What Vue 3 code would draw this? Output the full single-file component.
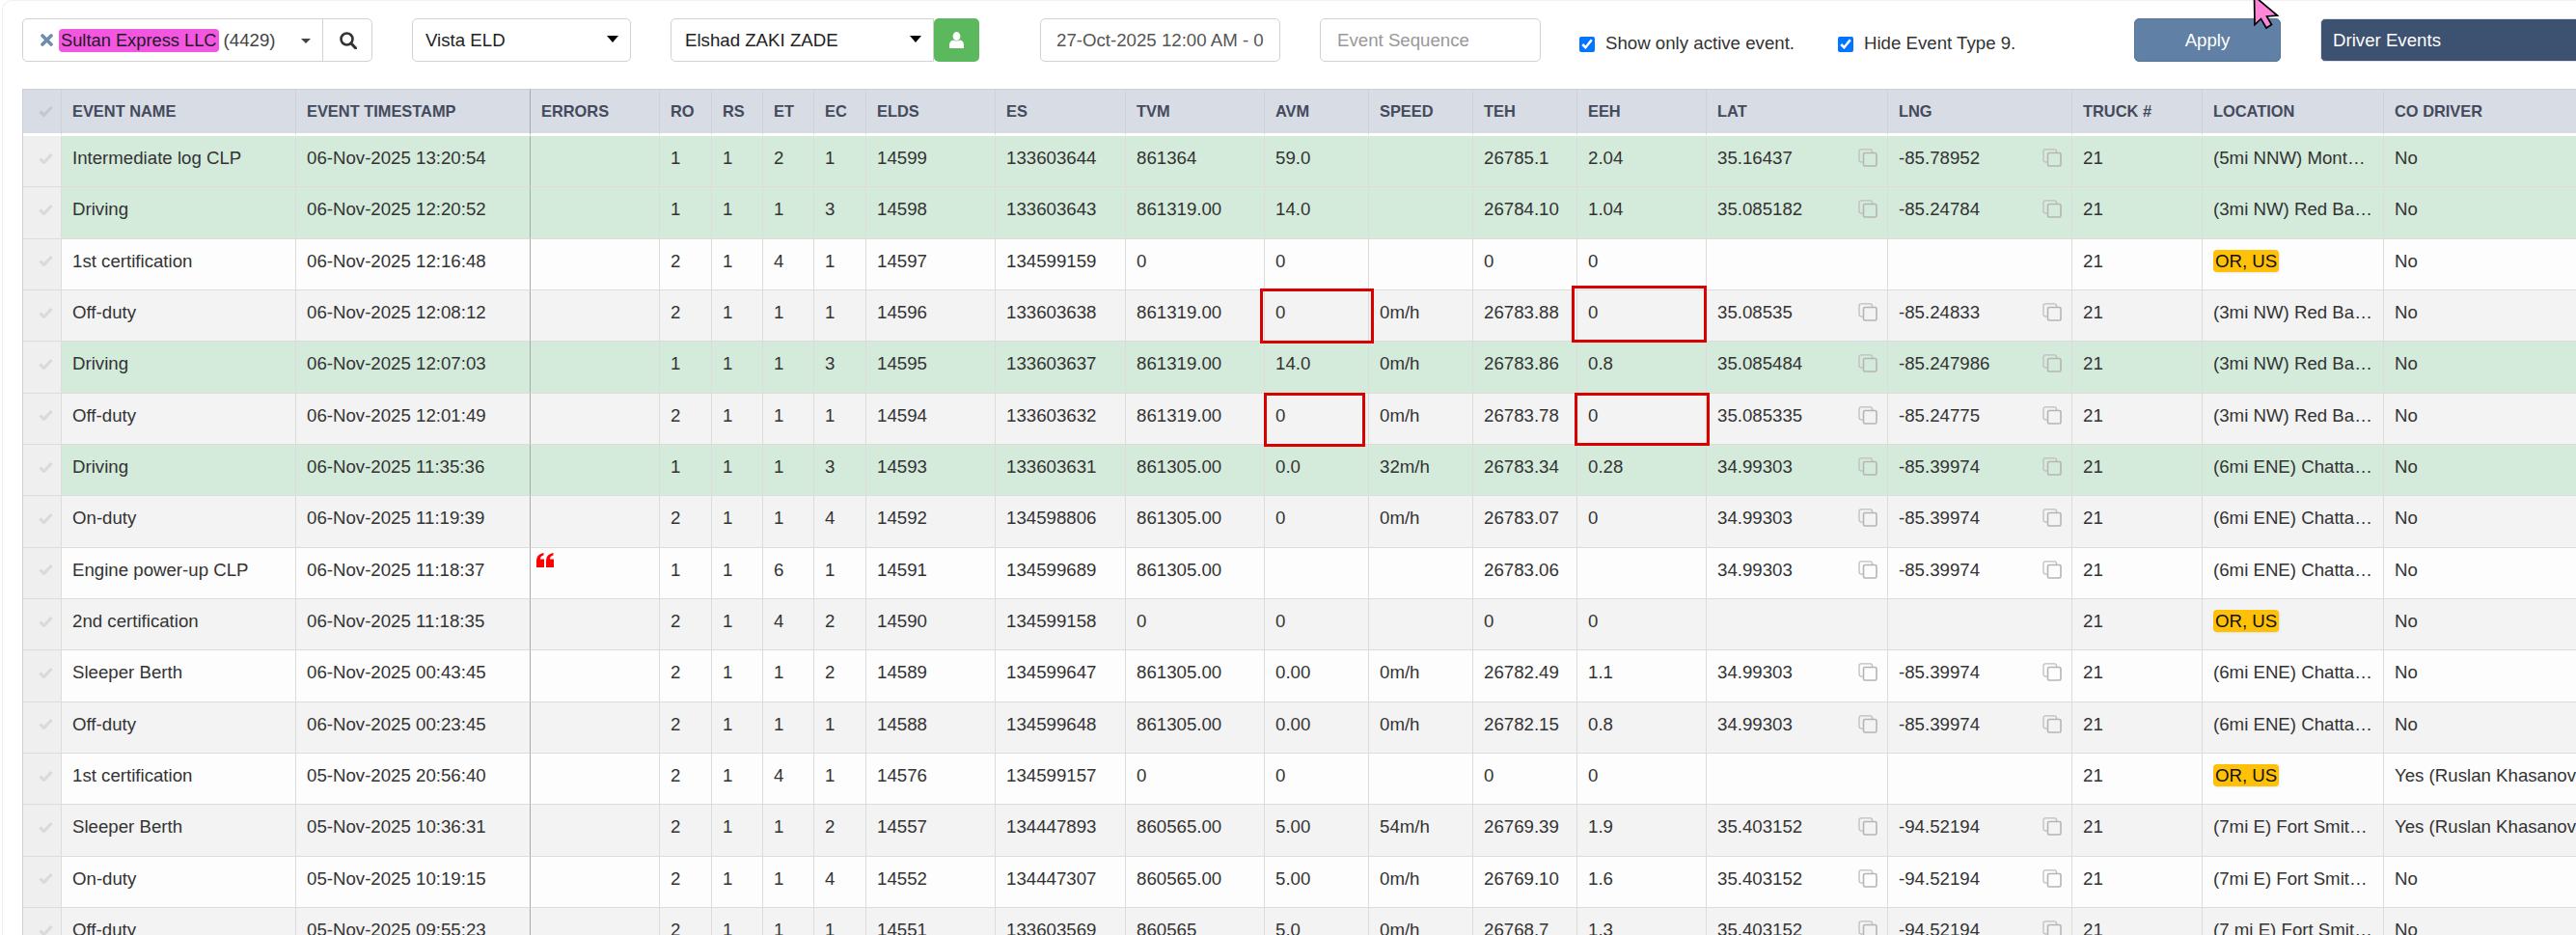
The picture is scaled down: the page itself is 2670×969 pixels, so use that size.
<script setup>
const widths = [39, 243, 243, 134, 54, 53, 53, 54, 134, 135, 144, 108, 108, 108, 134, 188, 191, 135, 188, 300]
const heads = ['EVENT NAME', 'EVENT TIMESTAMP', 'ERRORS', 'RO', 'RS', 'ET', 'EC', 'ELDS', 'ES', 'TVM', 'AVM', 'SPEED', 'TEH', 'EEH', 'LAT', 'LNG', 'TRUCK #', 'LOCATION', 'CO DRIVER']
const monte = '(5mi NNW) Mont…'
const red = '(3mi NW) Red Ba…'
const chat = '(6mi ENE) Chatta…'
const fort = '(7mi E) Fort Smit…'
const fort2 = '(7 mi E) Fort Smit…'
const yes = 'Yes (Ruslan Khasanov)'
const rows = [
  { g: 1, v: ['Intermediate log CLP', '06-Nov-2025 13:20:54', '', 1, 1, 2, 1, 14599, 133603644, '861364', '59.0', '', '26785.1', '2.04', '35.16437', '-85.78952', 21, monte, 'No'] },
  { g: 1, v: ['Driving', '06-Nov-2025 12:20:52', '', 1, 1, 1, 3, 14598, 133603643, '861319.00', '14.0', '', '26784.10', '1.04', '35.085182', '-85.24784', 21, red, 'No'] },
  { v: ['1st certification', '06-Nov-2025 12:16:48', '', 2, 1, 4, 1, 14597, 134599159, '0', '0', '', '0', '0', '', '', 21, '', 'No'] },
  { v: ['Off-duty', '06-Nov-2025 12:08:12', '', 2, 1, 1, 1, 14596, 133603638, '861319.00', '0', '0m/h', '26783.88', '0', '35.08535', '-85.24833', 21, red, 'No'] },
  { g: 1, v: ['Driving', '06-Nov-2025 12:07:03', '', 1, 1, 1, 3, 14595, 133603637, '861319.00', '14.0', '0m/h', '26783.86', '0.8', '35.085484', '-85.247986', 21, red, 'No'] },
  { v: ['Off-duty', '06-Nov-2025 12:01:49', '', 2, 1, 1, 1, 14594, 133603632, '861319.00', '0', '0m/h', '26783.78', '0', '35.085335', '-85.24775', 21, red, 'No'] },
  { g: 1, v: ['Driving', '06-Nov-2025 11:35:36', '', 1, 1, 1, 3, 14593, 133603631, '861305.00', '0.0', '32m/h', '26783.34', '0.28', '34.99303', '-85.39974', 21, chat, 'No'] },
  { v: ['On-duty', '06-Nov-2025 11:19:39', '', 2, 1, 1, 4, 14592, 134598806, '861305.00', '0', '0m/h', '26783.07', '0', '34.99303', '-85.39974', 21, chat, 'No'] },
  { err: 1, v: ['Engine power-up CLP', '06-Nov-2025 11:18:37', '', 1, 1, 6, 1, 14591, 134599689, '861305.00', '', '', '26783.06', '', '34.99303', '-85.39974', 21, chat, 'No'] },
  { v: ['2nd certification', '06-Nov-2025 11:18:35', '', 2, 1, 4, 2, 14590, 134599158, '0', '0', '', '0', '0', '', '', 21, '', 'No'] },
  { v: ['Sleeper Berth', '06-Nov-2025 00:43:45', '', 2, 1, 1, 2, 14589, 134599647, '861305.00', '0.00', '0m/h', '26782.49', '1.1', '34.99303', '-85.39974', 21, chat, 'No'] },
  { v: ['Off-duty', '06-Nov-2025 00:23:45', '', 2, 1, 1, 1, 14588, 134599648, '861305.00', '0.00', '0m/h', '26782.15', '0.8', '34.99303', '-85.39974', 21, chat, 'No'] },
  { v: ['1st certification', '05-Nov-2025 20:56:40', '', 2, 1, 4, 1, 14576, 134599157, '0', '0', '', '0', '0', '', '', 21, '', yes] },
  { v: ['Sleeper Berth', '05-Nov-2025 10:36:31', '', 2, 1, 1, 2, 14557, 134447893, '860565.00', '5.00', '54m/h', '26769.39', '1.9', '35.403152', '-94.52194', 21, fort, yes] },
  { v: ['On-duty', '05-Nov-2025 10:19:15', '', 2, 1, 1, 4, 14552, 134447307, '860565.00', '5.00', '0m/h', '26769.10', '1.6', '35.403152', '-94.52194', 21, fort, 'No'] },
  { v: ['Off-duty', '05-Nov-2025 09:55:23', '', 2, 1, 1, 1, 14551, 133603569, '860565', '5.0', '0m/h', '26768.7', '1.3', '35.403152', '-94.52194', 21, fort2, 'No'] }
]
const rowClass = (r, i) => (r.g ? 'green' : i % 2 ? 'grey' : 'white')
</script>

<template>
  <div class="page">
    <div class="panel">
      <div class="toolbar">
        <div class="box company">
          <div class="company-value">
            <svg class="clear" width="13" height="13" viewBox="0 0 13 13"><path d="M2 2l9 9M11 2l-9 9" stroke="#6d8db0" stroke-width="3.6" stroke-linecap="round"/></svg>
            <span class="hl">Sultan Express LLC</span>
            <span class="count">(4429)</span>
          </div>
          <span class="caret small"></span>
          <button class="search" aria-label="Search">
            <svg width="18" height="18" viewBox="0 0 18 18"><circle cx="7.5" cy="7.5" r="6" fill="none" stroke="#333" stroke-width="2.6"/><path d="M12 12l4.5 4.8" stroke="#333" stroke-width="3" stroke-linecap="round"/></svg>
          </button>
        </div>
        <div class="box select eld"><span>Vista ELD</span><span class="caret"></span></div>
        <div class="driver-group">
          <div class="box select driver"><span>Elshad ZAKI ZADE</span><span class="caret"></span></div>
          <button class="user" aria-label="Driver">
            <svg width="15" height="17" viewBox="0 0 15 17"><ellipse cx="7.5" cy="4.6" rx="3.9" ry="4.5" fill="#fff"/><path d="M0 17V13.5C0 10.5 2 9 4 8.6 5 9.8 10 9.8 11 8.6 13 9 15 10.5 15 13.5V17Z" fill="#fff"/></svg>
          </button>
        </div>
        <div class="box date">27-Oct-2025 12:00 AM - 0</div>
        <div class="box seq">Event Sequence</div>
        <label class="check first"><input type="checkbox" checked /><span>Show only active event.</span></label>
        <label class="check second"><input type="checkbox" checked /><span>Hide Event Type 9.</span></label>
        <button class="apply">Apply</button>
        <div class="events">Driver Events</div>
      </div>

      <table class="grid">
        <colgroup>
          <col v-for="(w, i) in widths" :key="i" :style="{ width: w + 'px' }" />
        </colgroup>
        <thead>
          <tr>
            <th class="chk">
              <svg class="tick head" viewBox="0 0 15 12"><path d="M1.5 6.5l4 4 8-8.5" fill="none" stroke="currentColor" stroke-width="3.2"/></svg>
            </th>
            <th v-for="(h, i) in heads" :key="h" :class="{ strong: i === 2 }">{{ h }}</th>
          </tr>
        </thead>
        <tbody>
          <tr v-for="(r, i) in rows" :key="i" :class="rowClass(r, i)">
            <td class="chk">
              <svg class="tick" viewBox="0 0 15 12"><path d="M1.5 6.5l4 4 8-8.5" fill="none" stroke="currentColor" stroke-width="3.2"/></svg>
            </td>
            <td v-for="(c, j) in r.v" :key="j" :class="{ strong: j === 2, last: j === 18 }">
              <svg v-if="j === 2 && r.err" class="quote" width="18" height="15" viewBox="0 0 18 15"><path d="M0 9C0 4 2 1 7.5 0V2.5C5 3 4 4.500 4 6.500H8V15H0ZM10 9C10 4 12 1 17.500 0V2.500C15 3 14 4.500 14 6.500H18V15H10Z" fill="#f00"/></svg>
              <div v-else-if="(j === 14 || j === 15) && c" class="coord">
                <span>{{ c }}</span>
                <svg class="copy" width="20" height="19" viewBox="0 0 20 19"><path d="M4.500 14H3A2 2 0 0 1 1 12V2.500A2 2 0 0 1 3 .8H12.500A2 2 0 0 1 14.500 2.500V4" fill="none" stroke="#bdbdbd" stroke-width="1.300"/><rect x="5.500" y="4.500" width="13.500" height="13.500" rx="1.500" fill="none" stroke="#b5b5b5" stroke-width="1.600"/></svg>
              </div>
              <span v-else-if="j === 17 && !c" class="state">OR, US</span>
              <template v-else>{{ c }}</template>
            </td>
          </tr>
        </tbody>
      </table>
    </div>

    <div class="mark m1"></div>
    <div class="mark m2"></div>
    <div class="mark m3"></div>
    <div class="mark m4"></div>

    <svg class="cursor" width="28" height="32" viewBox="0 0 28 32"><path d="M1.500 -4L2 25.500 8.500 19.500 14 29 19.500 25.500 14.500 17 25.500 16Z" fill="#ff85d8" stroke="#000" stroke-width="1.700"/></svg>
  </div>
</template>

<style>
html, body { margin: 0; background: #fff; }
</style>

<style scoped>
.page {
  position: relative;
  width: 2670px;
  height: 969px;
  overflow: hidden;
  background: #fff;
  font-family: "Liberation Sans", Arial, sans-serif;
  font-size: 18.67px;
  color: #333;
  padding-left: 2px;
  box-sizing: border-box;
}
.panel {
  width: 2800px;
  min-height: 1000px;
  border-left: 1px solid #eceef0;
  border-top: 1px solid #f2f2f2;
  border-top-left-radius: 10px;
  padding: 18px 0 0 20px;
  box-sizing: border-box;
}
.toolbar {
  display: flex;
  align-items: flex-start;
  height: 45px;
  margin-bottom: 28px;
}
.box {
  box-sizing: border-box;
  height: 45px;
  border: 1px solid #d2d2d2;
  border-radius: 5px;
  background: #fff;
  display: flex;
  align-items: center;
  flex: none;
}
.company { width: 363px; position: relative; }
.company-value {
  display: flex;
  align-items: center;
  width: 283px;
  padding-left: 18px;
  box-sizing: border-box;
  white-space: nowrap;
}
.clear { flex: none; margin-right: 6px; margin-top: -1px; }
.hl {
  background: #f556e0;
  color: #1a1a2a;
  border-radius: 4px;
  font-size: 18.3px;
  line-height: 24px;
  padding: 0 2px;
  margin-right: 5px;
}
.count { color: #444; }
.caret {
  width: 0;
  height: 0;
  border-left: 6px solid transparent;
  border-right: 6px solid transparent;
  border-top: 7px solid #000;
}
.caret.small {
  border-left-width: 5px;
  border-right-width: 5px;
  border-top: 5px solid #444;
  margin: 2px 0 0 5px;
}
.search {
  margin-left: auto;
  width: 51px;
  height: 100%;
  border: 0;
  border-left: 1px solid #d2d2d2;
  background: none;
  padding: 0 0 0 2px;
  display: flex;
  align-items: center;
  justify-content: center;
}
.select { justify-content: space-between; padding: 0 12px 0 13px; color: #222; }
.select .caret { margin-top: -2px; }
.eld { width: 227px; margin-left: 41px; }
.driver-group { display: flex; margin-left: 41px; flex: none; }
.driver { width: 273px; padding-left: 14px; border-radius: 5px 0 0 5px; }
.user {
  width: 47px;
  height: 45px;
  border: 0;
  padding: 0;
  border-radius: 5px;
  background: #5cb85c;
  display: flex;
  align-items: center;
  justify-content: center;
}
.date { width: 249px; margin-left: 63px; padding-left: 16px; color: #555; white-space: nowrap; }
.seq { width: 229px; margin-left: 41px; padding-left: 17px; color: #999; }
.check {
  display: flex;
  align-items: center;
  flex: none;
  height: 26px;
  margin-top: 13px;
  white-space: nowrap;
  color: #333;
}
.check input { width: 16px; height: 16px; margin: 2px 11px 0 0; flex: none; }
.first { width: 268px; margin-left: 40px; }
.second { width: 307px; }
.apply {
  width: 152px;
  height: 45px;
  flex: none;
  background: #6080a6;
  border: 1px solid #557596;
  border-radius: 5px;
  color: #fff;
  font: inherit;
  padding: 0;
}
.events {
  width: 320px;
  height: 45px;
  flex: none;
  box-sizing: border-box;
  margin-left: 41px;
  background: #3d5170;
  border: 1px solid #e2e2e2;
  border-radius: 5px;
  color: #fff;
  display: flex;
  align-items: center;
  padding-left: 12px;
}
.grid {
  table-layout: fixed;
  width: 2746px;
  border-collapse: separate;
  border-spacing: 0;
  border-left: 1px solid #cfcfcf;
}
th {
  height: 49px;
  box-sizing: border-box;
  background: #d8dce4;
  border-top: 1px solid #cdd0d5;
  border-bottom: 3px solid #fff;
  border-left: 1px solid #cfd2d8;
  font-size: 16.4px;
  font-weight: 700;
  color: #434a5c;
  text-align: left;
  padding: 0 0 0 11px;
  white-space: nowrap;
  overflow: hidden;
}
td {
  height: 53.33px;
  box-sizing: border-box;
  border-left: 1px solid #dcdcdc;
  border-bottom: 1px solid #dcdcdc;
  vertical-align: top;
  padding: 10px 6px 0 11px;
  line-height: 26.67px;
  white-space: nowrap;
  overflow: hidden;
  color: #333;
}
td.last { overflow: visible; }
th.strong, td.strong { border-left: 1px solid #a9a9a9; }
.green td { background: #d4ebdb; }
.grey td { background: #f3f3f3; }
.white td { background: #fdfdfd; }
th.chk { padding: 0; text-align: center; border-left: 0; }
td.chk {
  padding: 0;
  text-align: center;
  vertical-align: middle;
  background: #efefef !important;
  border-left: 0;
  color: #dadada;
}
.tick { display: block; width: 15px; height: 12px; margin: -7px 0 0 16px; }
.tick.head { margin: -1px 0 0 16px; color: #c4c8cf; }
.quote { display: block; margin: -5px 0 0 -5px; }
.coord { display: flex; justify-content: space-between; align-items: flex-start; margin-right: 4px; }
.copy { flex: none; margin-top: 3px; }
.state {
  display: inline-block;
  background: #ffc107;
  color: #111;
  border-radius: 4px;
  padding: 0 2px;
  line-height: 23px;
  box-shadow: 1px 1px 2px rgba(0, 0, 0, 0.08);
}
.mark {
  position: absolute;
  box-sizing: border-box;
  border: 3px solid #d90000;
}
.m1 { left: 1306px; top: 299px; width: 118px; height: 57px; }
.m2 { left: 1629px; top: 296px; width: 140px; height: 59px; }
.m3 { left: 1310px; top: 407px; width: 105px; height: 56px; }
.m4 { left: 1632px; top: 407px; width: 140px; height: 55px; }
.cursor { position: absolute; left: 2335px; top: 0; overflow: visible; }
</style>
